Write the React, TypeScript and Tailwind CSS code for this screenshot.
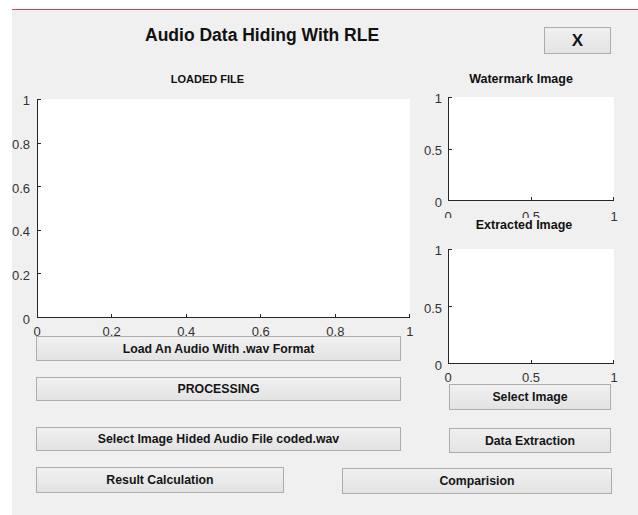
import React from 'react'

type AxesProps = {
  w: number
  h: number
  xTicks: string[]
  yTicks: string[]
  boxClass: string
  yColClass: string
  xRowClass: string
  // leading x labels that get cut off by whatever sits below them
  cutLabels?: number
  className?: string
}

// axis lines plus the little inward tick marks
function AxisLines({ w, h, nx, ny }: { w: number; h: number; nx: number; ny: number }) {
  const marks: React.ReactNode[] = []
  for (let i = 0; i < nx; i++) {
    const x = i === nx - 1 ? w - 0.5 : 0.5 + Math.round((i * (w - 1)) / (nx - 1))
    marks.push(<line key={`x${i}`} x1={x} x2={x} y1={h - 1} y2={h - 4} />)
  }
  for (let i = 0; i < ny; i++) {
    const y = 0.5 + Math.round((i * (h - 1)) / (ny - 1))
    marks.push(<line key={`y${i}`} x1={1} x2={4} y1={y} y2={y} />)
  }
  return (
    <svg className="absolute inset-0" width={w} height={h} shapeRendering="crispEdges">
      <g stroke="#262626" strokeWidth={1}>
        <line x1={0.5} y1={0} x2={0.5} y2={h} />
        <line x1={0} y1={h - 0.5} x2={w} y2={h - 0.5} />
        {marks}
      </g>
    </svg>
  )
}

function Axes({ w, h, xTicks, yTicks, boxClass, yColClass, xRowClass, cutLabels = 0, className = '' }: AxesProps) {
  return (
    <div className={`flex flex-col ${className}`}>
      <div className="flex items-stretch">
        <div className={`flex flex-col items-end justify-between -mt-[5px] -mb-[8px] text-[13px] leading-[13px] text-[#333333] ${yColClass}`}>
          {yTicks.map((t) => (
            <span key={t}>{t}</span>
          ))}
        </div>
        <div className={`relative bg-white ${boxClass}`}>
          <AxisLines w={w} h={h} nx={xTicks.length} ny={yTicks.length} />
        </div>
      </div>
      <div className={`flex items-start justify-between text-[13px] leading-[13px] text-[#333333] ${xRowClass}`}>
        {xTicks.map((t, i) => (
          <span key={t} className={i < cutLabels ? 'w-[24px] h-[8px] overflow-hidden text-center' : 'w-[24px] text-center'}>
            {t}
          </span>
        ))}
      </div>
    </div>
  )
}

function Btn({ label, className }: { label: string; className: string }) {
  return (
    <button
      className={`relative flex items-center justify-center border border-[#adadad] bg-linear-to-b from-[#f0f0f0] to-[#e3e3e3] pt-[1px] text-[12.3px] font-bold text-[#151515] ${className}`}
    >
      {label}
    </button>
  )
}

export default function App() {
  return (
    <div className="w-[638px] h-[515px] bg-white pt-[9px] pl-[12px] font-['Liberation_Sans',Arial,sans-serif]">
      <div className="h-px bg-[#d64541]" />
      <div className="h-[505px] bg-[#f0f0f0] overflow-hidden flex flex-col">
        {/* title bar */}
        <div className="flex items-start">
          <h1 className="ml-[133px] mt-[15px] text-[17.5px] leading-[20px] font-bold text-[#111111]">
            Audio Data Hiding With RLE
          </h1>
          <Btn label="X" className="ml-auto mr-[27px] mt-[17px] w-[67px] h-[27px] !text-[17px]" />
        </div>

        <div className="flex">
          {/* audio plot and its buttons */}
          <div className="w-[408px] flex flex-col items-start">
            <p className="w-full pr-[17px] mt-[19px] text-center text-[11px] leading-[13px] font-bold text-[#111111]">
              LOADED FILE
            </p>
            <Axes
              className="mt-[13px]"
              w={373}
              h={219}
              xTicks={['0', '0.2', '0.4', '0.6', '0.8', '1']}
              yTicks={['1', '0.8', '0.6', '0.4', '0.2', '0']}
              boxClass="w-[373px] h-[219px]"
              yColClass="w-[18px] mr-[7px]"
              xRowClass="mt-[7px] ml-[13px] w-[397px]"
            />
            <Btn label="Load An Audio With .wav Format" className="-mt-[2px] ml-[24px] w-[365px] h-[25px]" />
            <Btn label="PROCESSING" className="mt-[16px] ml-[24px] w-[365px] h-[24px]" />
            <Btn label="Select Image Hided Audio File coded.wav" className="mt-[26px] ml-[24px] w-[365px] h-[24px]" />
          </div>

          {/* watermark images */}
          <div className="flex-1 flex flex-col items-start">
            <p className="w-full pr-[16px] mt-[18px] text-center text-[12.5px] leading-[14px] font-bold text-[#111111]">
              Watermark Image
            </p>
            <Axes
              className="mt-[11px]"
              w={166}
              h={104}
              xTicks={['0', '0.5', '1']}
              yTicks={['1', '0.5', '0']}
              boxClass="w-[166px] h-[104px]"
              yColClass="w-[22px] mr-[6px]"
              xRowClass="mt-[9px] ml-[16px] w-[190px] h-[8px] overflow-visible"
              cutLabels={2}
            />
            <p className="mt-0 ml-[10px] w-[176px] pl-[12px] text-center text-[12.5px] leading-[14px] font-bold text-[#111111]">
              Extracted Image
            </p>
            <Axes
              className="mt-[17px]"
              w={166}
              h={115}
              xTicks={['0', '0.5', '1']}
              yTicks={['1', '0.5', '0']}
              boxClass="w-[166px] h-[115px]"
              yColClass="w-[22px] mr-[6px]"
              xRowClass="mt-[7px] ml-[16px] w-[190px]"
            />
            <Btn label="Select Image" className="ml-[29px] w-[162px] h-[26px]" />
            <Btn label="Data Extraction" className="mt-[18px] ml-[29px] w-[162px] h-[25px]" />
          </div>
        </div>

        <div className="flex items-start">
          <Btn label="Result Calculation" className="mt-[14px] ml-[24px] w-[248px] h-[26px]" />
          <Btn label="Comparision" className="mt-[15px] ml-[58px] w-[270px] h-[26px]" />
        </div>
      </div>
    </div>
  )
}
